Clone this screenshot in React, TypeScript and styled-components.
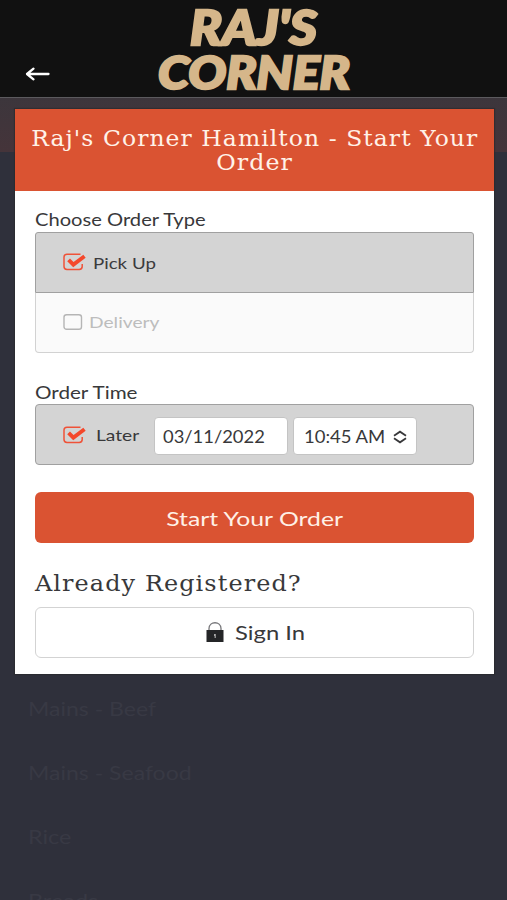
import React from "react";
import styled, { createGlobalStyle } from "styled-components";

const Global = createGlobalStyle`
  * { box-sizing: border-box; }
  body { margin: 0; background: #2f303b; font-family: Lato, sans-serif; color: #38383a; }
  button, h1, h2, p { margin: 0; padding: 0; font: inherit; color: inherit; }
`;

const slab = `"DejaVu Serif", serif`;

const Page = styled.div`
  height: 900px;
  overflow: hidden;
  background-color: #2f303b;
  background-image: linear-gradient(#3c363c, #45343a);
  background-position: 0 97px;
  background-size: 100% 55px;
  background-repeat: no-repeat;
`;
const Header = styled.header`
  height: 98px;
  background: #111111;
  border-bottom: 1px solid #5c5a5e;
  display: grid;
  grid-template-columns: 155px 197px 1fr;
`;
const Back = styled.button`
  border: 0;
  background: none;
  padding: 66px 0 0 25px;
  display: flex;
  align-items: flex-start;
`;
const Dialog = styled.main`
  width: 479px;
  height: 565px;
  margin: 11px 0 0 15px;
  background: #fff;
  box-shadow: 0 0 1px 1px rgba(40, 40, 44, 0.6);
`;
const Title = styled.h1`
  height: 82px;
  padding-top: 18px;
  background: #da5332;
  color: #fff2e8;
  display: flex;
  flex-direction: column;
  align-items: center;
  font: 400 22px/24px ${slab};
  letter-spacing: 1px;
`;
const Body = styled.div`
  padding: 17px 20px 0;
`;
const Wide = styled.span<{ $x: number; $center?: boolean }>`
  display: inline-block;
  white-space: nowrap;
  transform: scaleX(${(p) => p.$x});
  transform-origin: ${(p) => (p.$center ? "center" : "left")} center;
`;
const Label = styled.p<{ $low?: boolean }>`
  font-size: 16.5px;
  line-height: 24px;
  height: 24px;
  padding-top: ${(p) => (p.$low ? 1 : 0)}px;
`;
const Choices = styled.div`
  height: 121px;
  margin-bottom: 27px;
`;
const Choice = styled.div<{ $on?: boolean }>`
  height: ${(p) => (p.$on ? 61 : 60)}px;
  display: flex;
  align-items: center;
  gap: ${(p) => (p.$on ? 6 : 5)}px;
  padding: 0 0 ${(p) => (p.$on ? 1 : 2)}px 27px;
  font-size: 16px;
  background: ${(p) => (p.$on ? "#d4d4d4" : "#fafafa")};
  color: ${(p) => (p.$on ? "#3b3b3d" : "#bdbdbd")};
  border: 1px solid ${(p) => (p.$on ? "#a0a0a0" : "#d2d2d2")};
  border-top-width: ${(p) => (p.$on ? 1 : 0)}px;
  border-radius: ${(p) => (p.$on ? "3px 3px 0 0" : "0 0 4px 4px")};
`;
const TimeRow = styled.div`
  height: 61px;
  border: 1px solid #a0a0a0;
  border-radius: 4px;
  background: #d4d4d4;
  display: grid;
  grid-template-columns: 33px 58px 134px 129px;
  align-items: center;
  padding-left: 27px;
  font-size: 16px;
`;
const Field = styled.div<{ $gap?: boolean }>`
  height: 38px;
  margin-top: 3px;
  margin-left: ${(p) => (p.$gap ? 5 : 0)}px;
  padding: 2px 9px 0 ${(p) => (p.$gap ? 10 : 8)}px;
  display: flex;
  align-items: center;
  justify-content: space-between;
  border: 1px solid #c4c4c4;
  border-radius: 4px;
  background: #fff;
  font-size: 16.5px;
`;
const Button = styled.button<{ $primary?: boolean }>`
  width: 100%;
  height: 51px;
  display: flex;
  align-items: center;
  justify-content: center;
  gap: 11px;
  padding: ${(p) => (p.$primary ? "1px 0 0" : "0 10px 1px 0")};
  border: ${(p) => (p.$primary ? "0" : "1px solid #d3d3d3")};
  border-radius: 6px;
  background: ${(p) => (p.$primary ? "#da5332" : "#fff")};
  color: ${(p) => (p.$primary ? "#fff0e6" : "#38383a")};
  font-size: 19.5px;
`;
const Primary = styled(Button)`
  margin-top: 27px;
`;
const Heading = styled.h2`
  height: 64px;
  padding-top: 27px;
  font: 400 22px/28px ${slab};
  letter-spacing: 1px;
`;
const Menu = styled.nav`
  padding: 2px 0 0 28px;
  color: #383944;
  font-size: 19.5px;
`;
const MenuItem = styled.div`
  height: 64px;
  display: flex;
  align-items: center;
`;

const Tick = () => (
  <svg width="24" height="20" viewBox="0 0 24 20" fill="none">
    <path d="M17.5 2.2H4Q1 2.2 1 5V14.6Q1 17.5 4 17.5H16.2Q19.2 17.5 19.2 14.6V12" stroke="#ef5238" strokeWidth="1.5" />
    <path d="M5.6 7.8L10.4 12.6L21.5 4.3" stroke="#f4482c" strokeWidth="3.9" />
  </svg>
);
const Empty = () => (
  <svg width="21" height="20" viewBox="0 0 21 20" fill="none">
    <rect x="1" y="2.7" width="17.5" height="14.6" rx="2.6" stroke="#b5b5b5" strokeWidth="1.4" />
  </svg>
);

export default function App() {
  return (
    <>
      <Global />
      <Page>
        <Header>
          <Back aria-label="Back">
            <svg width="26" height="16" viewBox="0 0 26 16" fill="none" stroke="#fff" strokeWidth="2.3" strokeLinecap="round" strokeLinejoin="round">
              <path d="M23.5 8H2M8.5 2.7L2 8L8.5 13.3" />
            </svg>
          </Back>
          <svg width="197" height="97" viewBox="0 0 197 97" fontFamily="Lato, sans-serif" fontWeight="900" fontStyle="italic" fill="#d5b68a" stroke="#d5b68a" strokeWidth="2.4" strokeLinejoin="miter">
            <text x="35" y="44.8" fontSize="47.5" textLength="127" lengthAdjust="spacingAndGlyphs">RAJ'S</text>
            <text x="3" y="88.6" fontSize="45" textLength="192" lengthAdjust="spacingAndGlyphs">CORNER</text>
          </svg>
        </Header>
        <Dialog>
          <Title>
            <Wide $x={1.066} $center>Raj's Corner Hamilton - Start Your</Wide>
            <Wide $x={1.08} $center>Order</Wide>
          </Title>
          <Body>
            <Label><Wide $x={1.22}>Choose Order Type</Wide></Label>
            <Choices>
              <Choice $on><Tick /><Wide $x={1.17}>Pick Up</Wide></Choice>
              <Choice><Empty /><Wide $x={1.2}>Delivery</Wide></Choice>
            </Choices>
            <Label $low><Wide $x={1.25}>Order Time</Wide></Label>
            <TimeRow>
              <Tick />
              <Wide $x={1.2}>Later</Wide>
              <Field><Wide $x={1.113}>03/11/2022</Wide></Field>
              <Field $gap>
                <Wide $x={1.12}>10:45 AM</Wide>
                <svg width="14" height="14" viewBox="0 0 14 14" fill="none" stroke="#38383a" strokeWidth="1.8">
                  <path d="M1 5.7L7 1.7L13 5.7M1 8.3L7 12.3L13 8.3" />
                </svg>
              </Field>
            </TimeRow>
            <Primary $primary><Wide $x={1.27} $center>Start Your Order</Wide></Primary>
            <Heading><Wide $x={1.087}>Already Registered?</Wide></Heading>
            <Button>
              <svg width="18" height="22" viewBox="0 0 18 22">
                <path d="M3 10V7.5C3 -.2 15 -.2 15 7.5V10" fill="none" stroke="#77777a" strokeWidth="1.3" />
                <rect x=".5" y="9" width="17" height="12" fill="#242527" />
                <path d="M8 13h1.8v4H8.6v-2H8z" fill="#aaa" />
              </svg>
              <Wide $x={1.22}>Sign In</Wide>
            </Button>
          </Body>
        </Dialog>
        <Menu>
          <MenuItem><Wide $x={1.18}>Mains - Beef</Wide></MenuItem>
          <MenuItem><Wide $x={1.18}>Mains - Seafood</Wide></MenuItem>
          <MenuItem><Wide $x={1.2}>Rice</Wide></MenuItem>
          <MenuItem><Wide $x={1.2}>Breads</Wide></MenuItem>
        </Menu>
      </Page>
    </>
  );
}
